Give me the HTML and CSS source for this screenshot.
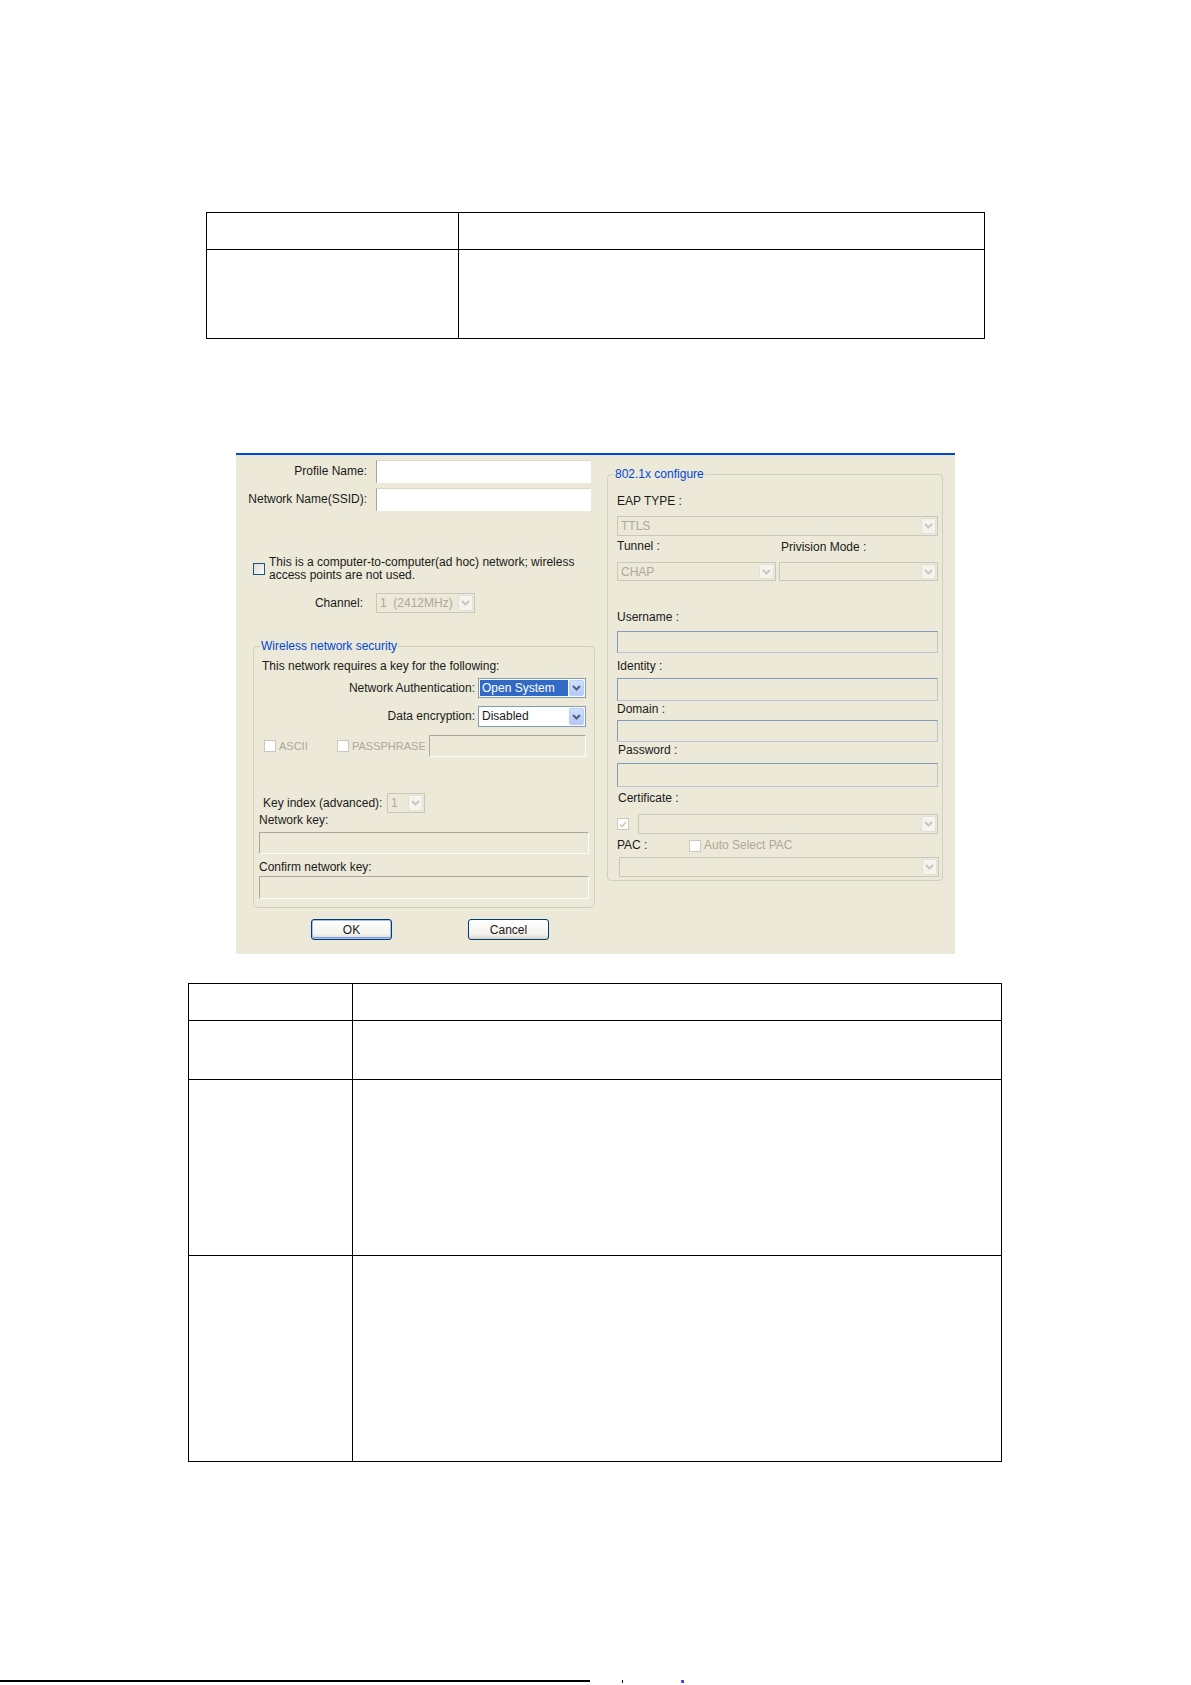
FILE: index.html
```html
<!DOCTYPE html>
<html lang="en">

<head>
  <meta charset="UTF-8">
  <meta name="viewport" content="width=device-width, initial-scale=1.0">
  <title>Profile settings</title>
  <link rel="stylesheet" href="styles.css">
</head>

<body>
  <div class="page">
    <table class="doc-table t1">
      <colgroup><col class="t1-c1"><col></colgroup>
      <tr class="t1-r1"><td></td><td></td></tr>
      <tr class="t1-r2"><td></td><td></td></tr>
    </table>

    <div class="dialog">
      <div class="col-left">
        <div class="field-row">
          <span class="lbl">Profile Name:</span>
          <span class="edit edit-name"></span>
        </div>
        <div class="field-row">
          <span class="lbl">Network Name(SSID):</span>
          <span class="edit edit-name"></span>
        </div>

        <div class="adhoc">
          <span class="chk-box"></span>
          <span>This is a computer-to-computer(ad hoc) network; wireless<br>access points are not used.</span>
        </div>

        <div class="channel-row">
          <span class="lbl">Channel:</span>
          <div class="combo off combo-channel">
            <span class="combo-val">1  (2412MHz)</span>
            <span class="combo-btn"><svg width="9" height="6" viewBox="0 0 9 6"><polyline points="1,1 4.5,4.5 8,1" /></svg></span>
          </div>
        </div>

        <fieldset class="group group-left">
          <legend>Wireless network security</legend>
          <div class="req-line">This network requires a key for the following:</div>
          <div class="combo-row">
            <span>Network Authentication:</span>
            <div class="combo combo-auth">
              <span class="combo-val sel">Open System</span>
              <span class="combo-btn"><svg width="9" height="6" viewBox="0 0 9 6"><polyline points="1,1 4.5,4.5 8,1" /></svg></span>
            </div>
          </div>
          <div class="combo-row row-enc">
            <span>Data encryption:</span>
            <div class="combo combo-auth">
              <span class="combo-val">Disabled</span>
              <span class="combo-btn"><svg width="9" height="6" viewBox="0 0 9 6"><polyline points="1,1 4.5,4.5 8,1" /></svg></span>
            </div>
          </div>
          <div class="ascii-row">
            <span class="chk chk-ascii"><span class="chk-box off"></span>ASCII</span>
            <span class="chk chk-pass"><span class="chk-box off"></span>PASSPHRASE</span>
            <span class="edit off edit-pass"></span>
          </div>
          <div class="keyidx-row">
            <span class="keyidx-lbl">Key index (advanced):</span>
            <div class="combo off combo-key">
              <span class="combo-val">1</span>
              <span class="combo-btn"><svg width="9" height="6" viewBox="0 0 9 6"><polyline points="1,1 4.5,4.5 8,1" /></svg></span>
            </div>
          </div>
          <div class="key-lbl">Network key:</div>
          <span class="edit off edit-key"></span>
          <div class="key-lbl confirm-lbl">Confirm network key:</div>
          <span class="edit off edit-key edit-confirm"></span>
        </fieldset>

        <div class="btn-row">
          <button class="btn btn-default">OK</button>
          <button class="btn">Cancel</button>
        </div>
      </div>

      <div class="col-right">
        <fieldset class="group group-right">
          <legend>802.1x configure</legend>
          <div class="r-lbl eap-lbl">EAP TYPE :</div>
          <div class="combo off combo-full ttls">
            <span class="combo-val">TTLS</span>
            <span class="combo-btn"><svg width="9" height="6" viewBox="0 0 9 6"><polyline points="1,1 4.5,4.5 8,1" /></svg></span>
          </div>
          <div class="tunnel-row">
            <span class="tunnel-lbl">Tunnel :</span>
            <span class="prov-lbl">Privision Mode :</span>
          </div>
          <div class="pair-row">
            <div class="combo off combo-half">
              <span class="combo-val">CHAP</span>
              <span class="combo-btn"><svg width="9" height="6" viewBox="0 0 9 6"><polyline points="1,1 4.5,4.5 8,1" /></svg></span>
            </div>
            <div class="combo off combo-half">
              <span class="combo-val"></span>
              <span class="combo-btn"><svg width="9" height="6" viewBox="0 0 9 6"><polyline points="1,1 4.5,4.5 8,1" /></svg></span>
            </div>
          </div>

          <div class="r-lbl user-lbl">Username :</div>
          <span class="edit blue e-user"></span>
          <div class="r-lbl id-lbl">Identity :</div>
          <span class="edit blue e-id"></span>
          <div class="r-lbl dom-lbl">Domain :</div>
          <span class="edit blue e-dom"></span>
          <div class="r-lbl pw-lbl">Password :</div>
          <span class="edit blue e-pw"></span>
          <div class="r-lbl cert-lbl">Certificate :</div>

          <div class="cert-row">
            <span class="chk-box off checked"><svg width="8" height="7" viewBox="0 0 8 7"><polyline points="1,3.5 3,5.5 7,1" /></svg></span>
            <div class="combo off combo-cert">
              <span class="combo-val"></span>
              <span class="combo-btn"><svg width="9" height="6" viewBox="0 0 9 6"><polyline points="1,1 4.5,4.5 8,1" /></svg></span>
            </div>
          </div>
          <div class="pac-row">
            <span class="pac-lbl">PAC :</span>
            <span class="chk"><span class="chk-box off"></span>Auto Select PAC</span>
          </div>
          <div class="combo off combo-pac">
            <span class="combo-val"></span>
            <span class="combo-btn"><svg width="9" height="6" viewBox="0 0 9 6"><polyline points="1,1 4.5,4.5 8,1" /></svg></span>
          </div>
        </fieldset>
      </div>
    </div>

    <table class="doc-table t2">
      <colgroup><col class="t2-c1"><col></colgroup>
      <tr class="t2-r1"><td></td><td></td></tr>
      <tr class="t2-r2"><td></td><td></td></tr>
      <tr class="t2-r3"><td></td><td></td></tr>
      <tr class="t2-r4"><td></td><td></td></tr>
    </table>

    <div class="foot">
      <span class="foot-line"></span>
      <span class="foot-mark"></span>
      <span class="foot-mark tint"></span>
    </div>
  </div>
</body>

</html>
```

FILE: styles.css
```css
html, body{
  margin: 0;
  background: #fff;
}
.page{
  padding-top: 212px;
}

/* document tables */
.doc-table{
  border-collapse: collapse;
  table-layout: fixed;
  border: 1px solid #000;
}
.doc-table td{
  border: 1px solid #000;
  padding: 0;
}
.t1{
  margin-left: 206px;
  width: 779px;
}
.t1-c1{ width: 252px; }
.t1-r1{ height: 37px; }
.t1-r2{ height: 89px; }

.t2{
  margin-top: 29px;
  margin-left: 188px;
  width: 814px;
}
.t2-c1{ width: 164px; }
.t2-r1{ height: 37px; }
.t2-r2{ height: 59px; }
.t2-r3{ height: 176px; }
.t2-r4{ height: 206px; }

/* dialog */
.dialog{
  margin: 114px 0 0 236px;
  width: 719px;
  height: 501px;
  box-sizing: border-box;
  border-top: 2px solid #0046d5;
  background: #ece9d8;
  display: flex;
  font: 12px/13px "Liberation Sans", Arial, sans-serif;
  color: #1a1a1a;
}
.col-left{
  width: 371px;
}
.col-right{
  width: 336px;
}

.field-row{
  display: flex;
  align-items: center;
  gap: 9px;
  height: 23px;
  margin-top: 5px;
}
.field-row .lbl{
  width: 131px;
  text-align: right;
}
.edit{
  display: block;
  box-sizing: border-box;
}
.edit-name{
  width: 215px;
  height: 23px;
  background: #fff;
  border-left: 1px solid #a7a597;
  border-top: 1px solid #dcd9c8;
}
.edit.off{
  background: #ece9d8;
  border: 1px solid;
  border-color: #aca899 #fff #fff #aca899;
}
.edit.blue{
  width: 321px;
  background: #ece9d8;
  border: 1px solid #7f9db9;
  border-right-color: #b7c6d3;
  border-bottom-color: #b7c6d3;
}

.adhoc{
  display: flex;
  align-items: center;
  gap: 4px;
  margin: 45px 0 0 17px;
}

.channel-row{
  display: flex;
  align-items: center;
  gap: 13px;
  margin-top: 11px;
}
.channel-row .lbl{
  width: 127px;
  text-align: right;
}

/* checkboxes */
.chk-box{
  display: inline-flex;
  align-items: center;
  justify-content: center;
  flex-shrink: 0;
  width: 12px;
  height: 12px;
  box-sizing: border-box;
  border: 1px solid #1c5180;
  background: linear-gradient(135deg, #dcdcd6, #fbfbf8);
}
.chk-box.off{
  border-color: #cac8bb;
  background: #fff;
}
.chk-box svg polyline{
  fill: none;
  stroke: #cac8bb;
  stroke-width: 1.6;
}
.chk{
  display: inline-flex;
  align-items: center;
  gap: 3px;
  color: #aca899;
}

/* combo boxes */
.combo{
  display: flex;
  box-sizing: border-box;
  height: 20px;
  padding: 1px;
  border: 1px solid #7f9db9;
  background: #fff;
}
.combo-val{
  flex: 1;
  padding-left: 2px;
  line-height: 16px;
  white-space: pre;
  overflow: hidden;
}
.combo-val.sel{
  background: #316ac5;
  color: #fff;
  margin-right: 1px;
}
.combo-btn{
  width: 15px;
  box-sizing: border-box;
  border: 1px solid #b9cdf6;
  border-radius: 2px;
  background: linear-gradient(#d2defc, #b5c9f8);
  display: flex;
  align-items: center;
  justify-content: center;
}
.combo-btn polyline{
  fill: none;
  stroke: #4d6185;
  stroke-width: 2;
}
.combo.off{
  border-color: #c9c7ba;
  background: #ece9d8;
  color: #aca899;
}
.combo.off .combo-btn{
  border-color: #e3e1d6;
  background: #f4f3ee;
}
.combo.off .combo-btn polyline{
  stroke: #c9c7ba;
}
.combo-channel{ width: 99px; }
.combo-auth{ width: 108px; }
.combo-key{ width: 38px; }
.combo-full{ width: 321px; }
.combo-half{ width: 159px; height: 19px; }
.combo-cert{ width: 300px; }
.combo-pac{ width: 320px; margin: 5px 0 0 2px; }

/* group boxes */
.group{
  margin: 0;
  box-sizing: border-box;
  border: 1px solid #d0d0bf;
  border-radius: 4px;
  min-width: 0;
}
.group legend{
  margin-left: 6px;
  padding: 0 1px;
  color: #0046d5;
  line-height: 13px;
}
.group-left{
  margin: 27px 0 0 17px;
  width: 342px;
  padding: 0 0 8px 0;
}
.req-line{
  margin-top: 7px;
  padding-left: 8px;
}
.combo-row{
  display: flex;
  align-items: center;
  justify-content: flex-end;
  gap: 3px;
  margin-top: 5px;
  padding-right: 8px;
}
.combo-row .combo{
  height: 20px;
}
.row-enc{
  margin-top: 8px;
}
.row-enc .combo{
  height: 21px;
}
.ascii-row{
  display: flex;
  align-items: center;
  margin-top: 8px;
  padding-left: 10px;
  font-size: 11px;
}
.chk-ascii{ width: 73px; }
.chk-pass{ width: 92px; }
.edit-pass{
  width: 157px;
  height: 22px;
}
.keyidx-row{
  display: flex;
  align-items: center;
  margin-top: 36px;
  padding-left: 9px;
}
.keyidx-lbl{
  width: 124px;
}
.key-lbl{
  margin-top: 1px;
  padding-left: 5px;
}
.confirm-lbl{
  margin-top: 7px;
}
.edit-key{
  margin: 5px 0 0 5px;
  width: 330px;
  height: 22px;
}
.edit-confirm{
  margin-top: 2px;
  height: 23px;
}

.btn-row{
  display: flex;
  gap: 76px;
  margin-top: 11px;
  padding-left: 75px;
}
.btn{
  width: 81px;
  height: 21px;
  box-sizing: border-box;
  padding: 0;
  border: 1px solid #003c74;
  border-radius: 3px;
  background: linear-gradient(#fff, #f3f2ec 75%, #d8d3c6);
  font: 12px "Liberation Sans", Arial, sans-serif;
  color: #1a1a1a;
}
.btn-default{
  box-shadow: inset 0 0 0 1px #a6c1ef, inset 0 -1px 0 1px #7d9fdc;
}

.group-right{
  margin-top: 13px;
  width: 336px;
  padding: 0 4px 3px 9px;
}
.group-right legend{
  margin-left: -3px;
}
.eap-lbl{ margin-top: 14px; }
.ttls{ margin-top: 8px; }
.tunnel-row{
  display: flex;
  margin-top: 4px;
}
.tunnel-lbl{ width: 164px; }
.prov-lbl{ position: relative; top: 1px; }
.pair-row{
  display: flex;
  gap: 3px;
  margin-top: 9px;
}
.user-lbl{ margin-top: 30px; }
.e-user{ margin-top: 7px; height: 22px; }
.id-lbl{ margin-top: 7px; }
.e-id{ margin-top: 5px; height: 23px; }
.dom-lbl{ margin-top: 2px; }
.e-dom{ margin-top: 4px; height: 22px; }
.pw-lbl{ margin-top: 2px; padding-left: 1px; }
.e-pw{ margin-top: 6px; height: 24px; }
.cert-lbl{ margin-top: 5px; padding-left: 1px; }
.cert-row{
  display: flex;
  align-items: center;
  justify-content: space-between;
  margin-top: 9px;
}
.pac-row{
  display: flex;
  align-items: center;
  margin-top: 5px;
}
.pac-lbl{ width: 72px; }

/* page footer rule */
.foot{
  display: flex;
  align-items: flex-start;
  margin-top: 218px;
  height: 5px;
}
.foot-line{
  width: 590px;
  height: 2px;
  background: #000;
}
.foot-mark{
  margin-left: 32px;
  width: 1px;
  height: 3px;
  background: #000;
}
.foot-mark.tint{
  margin-left: 58px;
  width: 3px;
  background: linear-gradient(90deg, #00a8ff, #3040e0, #e000e0);
}
```
